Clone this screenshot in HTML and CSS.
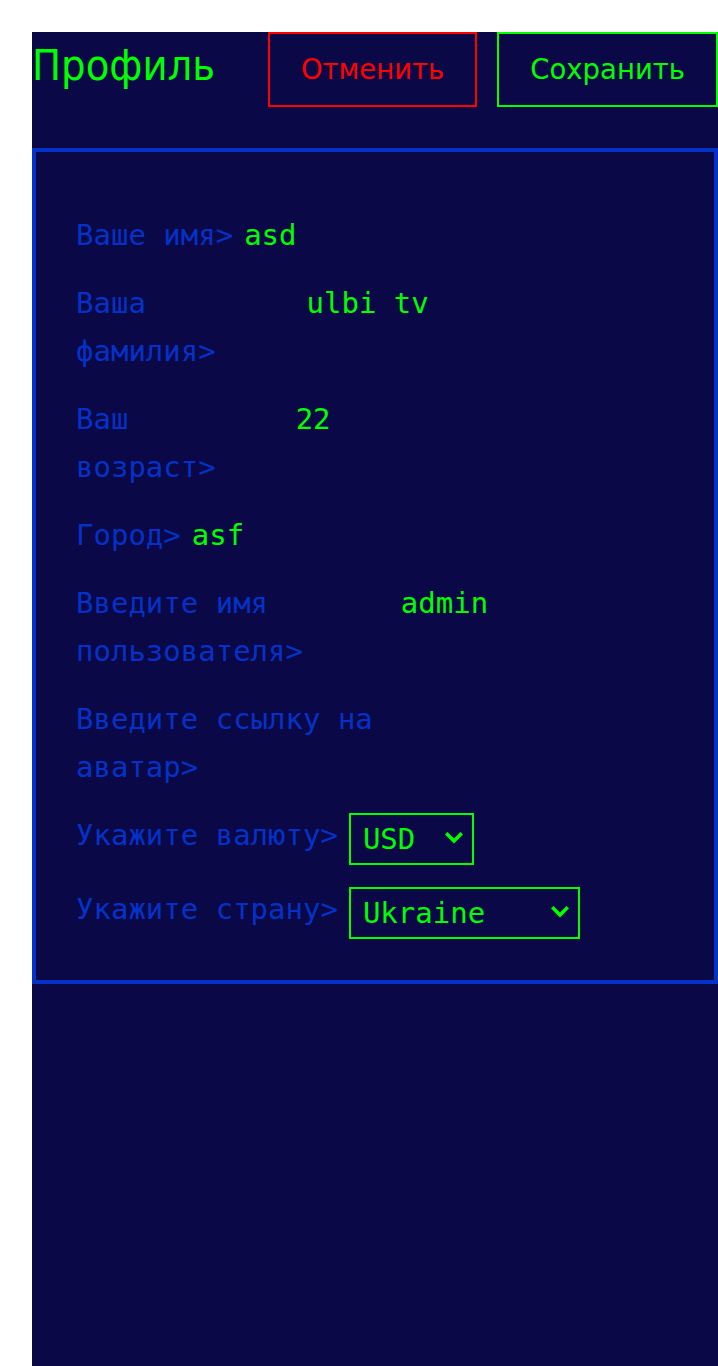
FILE: index.html
```html
<!DOCTYPE html>
<html lang="ru">
<head>
<meta charset="utf-8">
<title>Профиль</title>
<link rel="stylesheet" href="styles.css">
</head>
<body>
<div class="app">
  <main class="page">
    <header class="page-header">
      <h1 class="title">Профиль</h1>
      <div class="actions">
        <button class="btn btn-cancel" type="button">Отменить</button>
        <button class="btn btn-save" type="button">Сохранить</button>
      </div>
    </header>
    <section class="card">
      <div class="row">
        <label class="label">Ваше имя&gt;</label>
        <input class="input" value="asd">
      </div>
      <div class="row">
        <label class="label">Ваша фамилия&gt;</label>
        <input class="input" value="ulbi tv">
      </div>
      <div class="row">
        <label class="label">Ваш возраст&gt;</label>
        <input class="input" value="22">
      </div>
      <div class="row">
        <label class="label">Город&gt;</label>
        <input class="input" value="asf">
      </div>
      <div class="row">
        <label class="label">Введите имя пользователя&gt;</label>
        <input class="input" value="admin">
      </div>
      <div class="row">
        <label class="label">Введите ссылку на аватар&gt;</label>
        <input class="input" value="">
      </div>
      <div class="row">
        <label class="label">Укажите валюту&gt;</label>
        <div class="select-wrap select-currency">
          <select class="select">
            <option>USD</option>
            <option>EUR</option>
            <option>RUB</option>
          </select>
          <svg class="chevron" viewBox="0 0 18 12" width="18" height="12" aria-hidden="true">
            <path d="M2.5 2.5 L9 9 L15.5 2.5" fill="none" stroke="#00ff00" stroke-width="3.6" stroke-linecap="square" stroke-linejoin="miter"/>
          </svg>
        </div>
      </div>
      <div class="row">
        <label class="label">Укажите страну&gt;</label>
        <div class="select-wrap select-country">
          <select class="select">
            <option>Ukraine</option>
            <option>Russia</option>
            <option>Belarus</option>
            <option>Kazakhstan</option>
            <option>Armenia</option>
          </select>
          <svg class="chevron" viewBox="0 0 18 12" width="18" height="12" aria-hidden="true">
            <path d="M2.5 2.5 L9 9 L15.5 2.5" fill="none" stroke="#00ff00" stroke-width="3.6" stroke-linecap="square" stroke-linejoin="miter"/>
          </svg>
        </div>
      </div>
    </section>
  </main>
</div>
</body>
</html>
```
FILE: styles.css
```css
* {
  box-sizing: border-box;
}

html, body {
  margin: 0;
  padding: 0;
  background: #ffffff;
}

.app {
  min-height: 100vh;
  padding: 32px 0 0 32px;
  display: flex;
}

.page {
  flex: 1;
  background: #0a0847;
  display: flex;
  flex-direction: column;
  min-width: 0;
}

.page-header {
  display: flex;
  justify-content: space-between;
  align-items: flex-start;
  height: 75px;
}

.title {
  margin: 8px 0 0 0;
  font-family: "DejaVu Sans Condensed", "DejaVu Sans", sans-serif;
  font-stretch: condensed;
  font-weight: normal;
  font-size: 43px;
  line-height: normal;
  color: #00ff00;
}

.actions {
  display: flex;
  gap: 20px;
}

.btn {
  height: 75px;
  padding: 0 31px;
  background: transparent;
  border: 2px solid;
  font-family: "DejaVu Sans", sans-serif;
  font-size: 27.5px;
  line-height: 1;
  cursor: pointer;
}

.btn-cancel {
  color: #ff0000;
  border-color: #ff0000;
}

.btn-save {
  color: #00ff00;
  border-color: #00ff00;
}

.card {
  margin-top: 41px;
  border: 4px solid #0432c8;
  padding: 59px 40px 41px 40px;
  display: flex;
  flex-direction: column;
  gap: 20px;
}

.row {
  display: flex;
  align-items: flex-start;
  gap: 11px;
}

.label {
  flex: 0 1 auto;
  font-family: "DejaVu Sans Mono", monospace;
  font-size: 29px;
  line-height: 48px;
  color: #0432c8;
}

.input {
  flex: 0 1 380px;
  min-width: 0;
  height: 48px;
  padding: 0;
  margin: 0;
  border: none;
  outline: none;
  background: transparent;
  font-family: "DejaVu Sans Mono", monospace;
  font-size: 29px;
  line-height: 48px;
  color: #00ff00;
}

.select-wrap {
  position: relative;
  flex: 0 0 auto;
  margin-top: 2px;
  height: 52px;
}

.select-currency {
  width: 125px;
}

.select-country {
  width: 231px;
}

.select {
  -webkit-appearance: none;
  appearance: none;
  width: 100%;
  height: 52px;
  margin: 0;
  padding: 0 0 0 12px;
  border: 2px solid #00ff00;
  border-radius: 0;
  background: transparent;
  font-family: "DejaVu Sans Mono", monospace;
  font-size: 29px;
  line-height: 48px;
  color: #00ff00;
  outline: none;
}

.select option {
  background: #0a0847;
  color: #00ff00;
}

.chevron {
  position: absolute;
  right: 11px;
  top: 19px;
  pointer-events: none;
}
```
